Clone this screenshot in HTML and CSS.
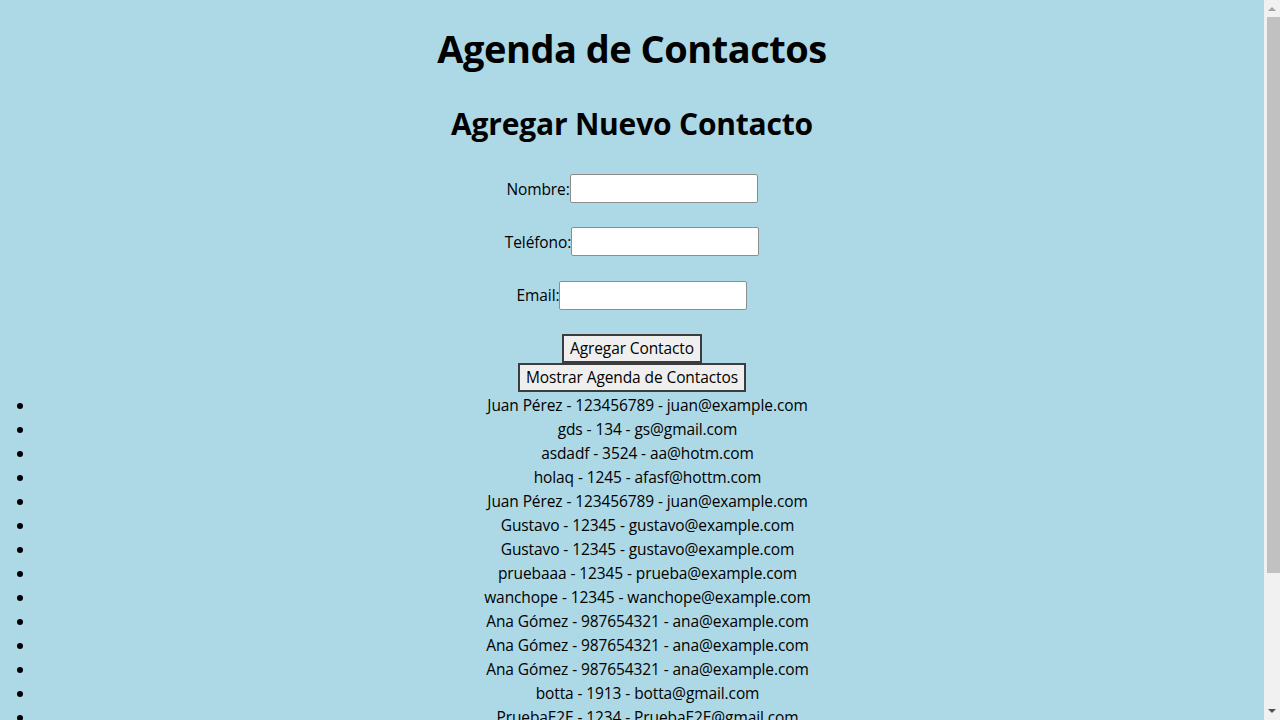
FILE: index.html
```html
<!DOCTYPE html>
<html lang="es">
<head>
<meta charset="utf-8">
<title>Agenda de Contactos</title>
<link rel="stylesheet" href="styles.css">
</head>
<body class="page">
  <h1 class="title">Agenda de Contactos</h1>
  <h2 class="subtitle">Agregar Nuevo Contacto</h2>
  <form class="form">
    <div class="row"><label class="label" for="nombre">Nombre:</label><input class="field" id="nombre" type="text"></div>
    <div class="row"><label class="label" for="telefono">Teléfono:</label><input class="field" id="telefono" type="text"></div>
    <div class="row"><label class="label" for="email">Email:</label><input class="field" id="email" type="text"></div>
    <button class="btn" type="button">Agregar Contacto</button>
  </form>
  <div class="show"><button class="btn" type="button">Mostrar Agenda de Contactos</button></div>
  <ul class="list">
    <li class="item">Juan Pérez - 123456789 - juan@example.com</li>
    <li class="item">gds - 134 - gs@gmail.com</li>
    <li class="item">asdadf - 3524 - aa@hotm.com</li>
    <li class="item">holaq - 1245 - afasf@hottm.com</li>
    <li class="item">Juan Pérez - 123456789 - juan@example.com</li>
    <li class="item">Gustavo - 12345 - gustavo@example.com</li>
    <li class="item">Gustavo - 12345 - gustavo@example.com</li>
    <li class="item">pruebaaa - 12345 - prueba@example.com</li>
    <li class="item">wanchope - 12345 - wanchope@example.com</li>
    <li class="item">Ana Gómez - 987654321 - ana@example.com</li>
    <li class="item">Ana Gómez - 987654321 - ana@example.com</li>
    <li class="item">Ana Gómez - 987654321 - ana@example.com</li>
    <li class="item">botta - 1913 - botta@gmail.com</li>
    <li class="item">PruebaE2E - 1234 - PruebaE2E@gmail.com</li>
    <li class="item">PruebaE2E - 1234 - PruebaE2E@gmail.com</li>
  </ul>
  <div class="scrollbar" aria-hidden="true">
    <svg class="arrow" width="16" height="16" viewBox="0 0 16 16"><polygon points="4,11 12,11 8,7" fill="#a3a3a3"/></svg>
    <div class="thumb"></div>
    <div class="track-space"></div>
    <svg class="arrow" width="16" height="16" viewBox="0 0 16 16"><polygon points="4,5 12,5 8,9" fill="#505050"/></svg>
  </div>
</body>
</html>
```
FILE: styles.css
```css
html {
  background: #add8e6;
  overflow: hidden;
}
.page {
  margin: 0 16px 0 0;
  padding: 0 8px;
  background: #add8e6;
  color: #000;
  font-family: "Open Sans", "Noto Sans", sans-serif;
  font-size: 15.5px;
  letter-spacing: -0.1px;
  text-align: center;
}
.title {
  margin: 21px 0 0;
  font-size: 38px;
  line-height: 55px;
  letter-spacing: -0.5px;
  font-weight: 700;
}
.subtitle {
  margin: 28px 0 0;
  font-size: 30px;
  line-height: 40px;
  letter-spacing: -0.2px;
  font-weight: 700;
}
.form {
  margin: 30px 0 0;
  display: flex;
  flex-direction: column;
  align-items: center;
  gap: 24.33px;
}
.row {
  display: flex;
  align-items: center;
  height: 29px;
}
.label {
  line-height: 21px;
  padding-top: 1px;
}
.field {
  box-sizing: border-box;
  width: 188px;
  height: 29px;
  margin: 0;
  padding: 1px 2px;
  border: 1px solid #8d8d8d;
  border-radius: 2px;
  background: #fff;
  font: inherit;
}
.btn {
  box-sizing: border-box;
  height: 29px;
  margin: 0;
  padding: 0 6px;
  border: 2px solid #3c3c3c;
  border-radius: 0;
  background: #efefef;
  color: #000;
  font: inherit;
  letter-spacing: -0.1px;
  line-height: 25px;
}
.show {
  display: flex;
  justify-content: center;
}
.list {
  margin: 1px -4px 0 0;
  padding: 0 0 0 27px;
}
.item {
  line-height: 24px;
}
.scrollbar {
  position: fixed;
  top: 0;
  right: 0;
  width: 16px;
  height: 720px;
  background: #f1f1f1;
  display: flex;
  flex-direction: column;
  align-items: center;
}
.arrow {
  display: block;
  flex: none;
}
.thumb {
  flex: none;
  width: 13px;
  height: 556px;
  margin-top: 1px;
  margin-left: 2px;
  background: #c1c1c1;
}
.track-space {
  flex: 1;
}
```
